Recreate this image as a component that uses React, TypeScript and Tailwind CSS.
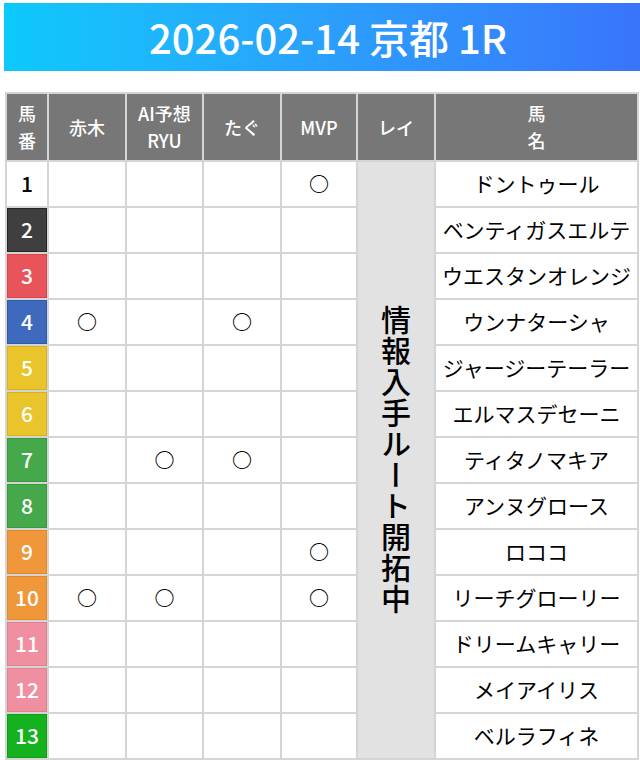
import React from "react";

// 枠番カラー（背景・枠線・文字）
const frameColors: Record<number, string> = {
  1: "bg-white border-white text-black",
  2: "bg-[#3f3f3f] border-[#262626] text-white",
  3: "bg-[#e9545b] border-[#d7434b] text-white",
  4: "bg-[#3e69bd] border-[#2f59aa] text-white",
  5: "bg-[#e9c42b] border-[#d8b21c] text-white",
  6: "bg-[#e9c42b] border-[#d8b21c] text-white",
  7: "bg-[#45a94b] border-[#379a3d] text-white",
  8: "bg-[#45a94b] border-[#379a3d] text-white",
  9: "bg-[#f0973a] border-[#e3882b] text-white",
  10: "bg-[#f0973a] border-[#e3882b] text-white",
  11: "bg-[#ef8fa0] border-[#e28092] text-white",
  12: "bg-[#ef8fa0] border-[#e28092] text-white",
  13: "bg-[#15b21f] border-[#0fa018] text-white",
};

type Horse = {
  no: number;
  name: string;
  akagi?: boolean;
  ai?: boolean;
  tagu?: boolean;
  mvp?: boolean;
};

const horses: Horse[] = [
  { no: 1, name: "ドントゥール", mvp: true },
  { no: 2, name: "ベンティガスエルテ" },
  { no: 3, name: "ウエスタンオレンジ" },
  { no: 4, name: "ウンナターシャ", akagi: true, tagu: true },
  { no: 5, name: "ジャージーテーラー" },
  { no: 6, name: "エルマスデセーニ" },
  { no: 7, name: "ティタノマキア", ai: true, tagu: true },
  { no: 8, name: "アンヌグロース" },
  { no: 9, name: "ロココ", mvp: true },
  { no: 10, name: "リーチグローリー", akagi: true, ai: true, mvp: true },
  { no: 11, name: "ドリームキャリー" },
  { no: 12, name: "メイアイリス" },
  { no: 13, name: "ベルラフィネ" },
];

const Mark = ({ on }: { on?: boolean }) => (
  <div className="bg-white flex items-center justify-center text-[20px] font-bold text-black">
    {on ? "○" : ""}
  </div>
);

const HeadCell = ({ children }: { children: React.ReactNode }) => (
  <div className="bg-[#777777] flex items-center justify-center text-center text-white text-[18px] font-medium leading-[27px]">
    {children}
  </div>
);

export default function App() {
  return (
    <div
      className="w-[640px] h-[760px] overflow-hidden bg-white"
      style={{ fontFamily: '"Noto Sans CJK JP", "Noto Sans", sans-serif' }}
    >
      <div className="mt-[3px] ml-[4px] w-[648px] h-[68px] bg-gradient-to-r from-[#0bc9fb] to-[#3a72fb] flex items-center justify-center">
        <h1 className="text-white text-[40px] font-medium leading-none">
          2026-02-14 京都 1R
        </h1>
      </div>

      <div className="mt-[21px] ml-[5px] w-[634px] grid grid-cols-[40px_76px_75px_76px_74px_76px_201px] grid-rows-[66px_repeat(13,44px)] gap-[2px] p-[2px] bg-[#d5d5d5]">
        <HeadCell>
          馬<br />番
        </HeadCell>
        <HeadCell>赤木</HeadCell>
        <HeadCell>
          AI予想<br />RYU
        </HeadCell>
        <HeadCell>たぐ</HeadCell>
        <HeadCell>MVP</HeadCell>
        <HeadCell>レイ</HeadCell>
        <HeadCell>
          馬<br />名
        </HeadCell>

        {/* レイ列：全行結合 */}
        <div className="col-start-6 row-start-2 row-span-13 bg-[#e2e2e2] flex items-center justify-center">
          <span className="[writing-mode:vertical-rl] text-[30px] font-medium tracking-[1px] text-black leading-none">
            情報入手ルート開拓中
          </span>
        </div>

        {horses.map((h) => (
          <React.Fragment key={h.no}>
            <div
              className={`flex items-center justify-center border text-[21px] font-medium ${frameColors[h.no]}`}
            >
              {h.no}
            </div>
            <Mark on={h.akagi} />
            <Mark on={h.ai} />
            <Mark on={h.tagu} />
            <Mark on={h.mvp} />
            <div className="bg-white flex items-center justify-center text-[21px] text-black whitespace-nowrap">
              {h.name}
            </div>
          </React.Fragment>
        ))}
      </div>
    </div>
  );
}
